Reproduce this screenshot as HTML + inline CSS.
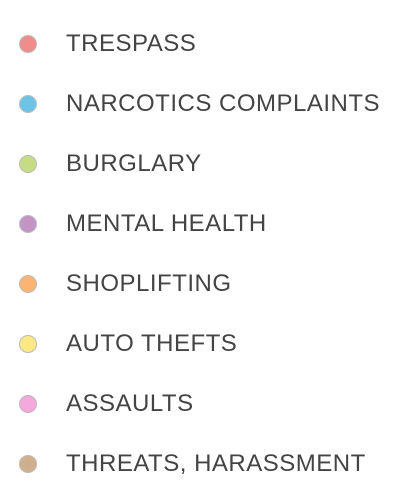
<html><head><style>
body{margin:0;background:#fff;width:414px;height:504px;overflow:hidden;font-family:"Liberation Sans",sans-serif}
.r{position:absolute;left:0;height:30px;width:414px}
.c{position:absolute;left:19px;top:6px;width:16px;height:16px;border-radius:50%;border:1.5px solid #bbb;box-sizing:content-box}
.t{position:absolute;left:66px;top:0;font-size:24px;line-height:30px;color:#444;letter-spacing:0.5px}
</style></head><body>
<div class="r" style="top:29px"><div class="c" style="background:#f08c8c"></div><div class="t">TRESPASS</div></div>
<div class="r" style="top:89px"><div class="c" style="background:#6ec4e4"></div><div class="t">NARCOTICS COMPLAINTS</div></div>
<div class="r" style="top:149px"><div class="c" style="background:#c4dc84"></div><div class="t">BURGLARY</div></div>
<div class="r" style="top:209px"><div class="c" style="background:#c494c4"></div><div class="t">MENTAL HEALTH</div></div>
<div class="r" style="top:269px"><div class="c" style="background:#fcb474"></div><div class="t">SHOPLIFTING</div></div>
<div class="r" style="top:329px"><div class="c" style="background:#fce884"></div><div class="t">AUTO THEFTS</div></div>
<div class="r" style="top:389px"><div class="c" style="background:#f4a8dc"></div><div class="t">ASSAULTS</div></div>
<div class="r" style="top:449px"><div class="c" style="background:#d0b08c"></div><div class="t">THREATS, HARASSMENT</div></div>
</body></html>
